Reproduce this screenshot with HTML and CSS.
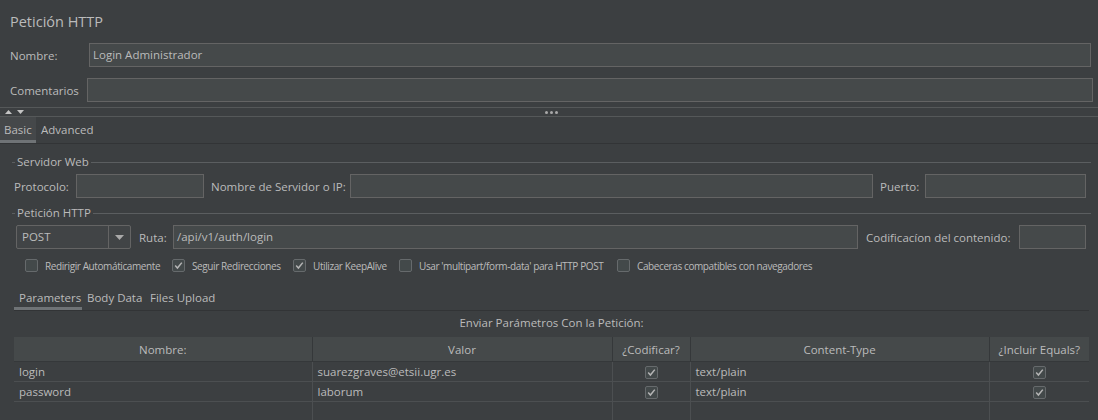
FILE: index.html
```html
<!DOCTYPE html>
<html lang="es">
<head>
<meta charset="utf-8">
<title>Petición HTTP</title>
<link rel="stylesheet" href="styles.css">
</head>
<body>
<div class="app">
  <div class="title">Petición HTTP</div>

  <div class="name-row">
    <span class="lbl lbl-name">Nombre:</span>
    <div class="input grow">Login Administrador</div>
  </div>
  <div class="comment-row">
    <span class="lbl lbl-comment">Comentarios</span>
    <div class="input grow"></div>
  </div>

  <div class="splitter">
    <div class="split-arrows">
      <svg width="7" height="4" viewBox="0 0 7 4"><polygon points="0,4 3.5,0 7,4" fill="#c4c4c4"/></svg>
      <svg width="7" height="4" viewBox="0 0 7 4"><polygon points="0,0 7,0 3.5,4" fill="#c4c4c4"/></svg>
    </div>
    <div class="split-dots"><i></i><i></i><i></i></div>
    <div></div>
  </div>

  <div class="tabbar top-tabs">
    <span class="tab tab-basic active">Basic</span>
    <span class="tab tab-adv">Advanced</span>
  </div>

  <div class="panel">
    <div class="group-title first"><span>Servidor Web</span></div>
    <div class="form-row server-row">
      <span class="lbl w-proto">Protocolo:</span>
      <div class="input proto"></div>
      <span class="lbl w-host">Nombre de Servidor o IP:</span>
      <div class="input grow"></div>
      <span class="lbl w-port">Puerto:</span>
      <div class="input port"></div>
    </div>

    <div class="group-title second"><span>Petición HTTP</span></div>
    <div class="form-row req-row">
      <div class="combo">
        <span class="combo-value">POST</span>
        <span class="combo-btn"><svg width="9" height="5" viewBox="0 0 9 5"><polygon points="0,0 9,0 4.5,5" fill="#a9a9a9"/></svg></span>
      </div>
      <span class="lbl w-ruta">Ruta:</span>
      <div class="input grow">/api/v1/auth/login</div>
      <span class="lbl w-enc">Codificacíon del contenido:</span>
      <div class="input enc"></div>
    </div>

    <div class="options">
      <label class="opt opt1"><span class="cb"></span><span class="opt-text">Redirigir Automáticamente</span></label>
      <label class="opt opt2"><span class="cb checked"><svg width="13" height="13" viewBox="0 0 13 13"><path d="M3.2 6.6 L5.4 9 L9.8 3.6" fill="none" stroke="#b5b5b5" stroke-width="1.5"/></svg></span><span class="opt-text">Seguir Redirecciones</span></label>
      <label class="opt opt3"><span class="cb checked"><svg width="13" height="13" viewBox="0 0 13 13"><path d="M3.2 6.6 L5.4 9 L9.8 3.6" fill="none" stroke="#b5b5b5" stroke-width="1.5"/></svg></span><span class="opt-text">Utilizar KeepAlive</span></label>
      <label class="opt opt4"><span class="cb"></span><span class="opt-text">Usar 'multipart/form-data' para HTTP POST</span></label>
      <label class="opt opt5"><span class="cb"></span><span class="opt-text">Cabeceras compatibles con navegadores</span></label>
    </div>

    <div class="tabbar param-tabs">
      <span class="tab tab-params active">Parameters</span>
      <span class="tab tab-body">Body Data</span>
      <span class="tab tab-files">Files Upload</span>
    </div>

    <div class="caption">Enviar Parámetros Con la Petición:</div>

    <table class="params">
      <colgroup>
        <col class="c-name"><col class="c-value"><col class="c-enc"><col class="c-type"><col class="c-eq">
      </colgroup>
      <thead>
        <tr><th>Nombre:</th><th>Valor</th><th>¿Codificar?</th><th>Content-Type</th><th>¿Incluir Equals?</th></tr>
      </thead>
      <tbody>
        <tr>
          <td>login</td><td>suarezgraves@etsii.ugr.es</td>
          <td class="center"><span class="cb small checked"><svg width="13" height="13" viewBox="0 0 13 13"><path d="M3.2 6.6 L5.4 9 L9.8 3.6" fill="none" stroke="#b5b5b5" stroke-width="1.5"/></svg></span></td>
          <td>text/plain</td>
          <td class="center"><span class="cb small checked"><svg width="13" height="13" viewBox="0 0 13 13"><path d="M3.2 6.6 L5.4 9 L9.8 3.6" fill="none" stroke="#b5b5b5" stroke-width="1.5"/></svg></span></td>
        </tr>
        <tr>
          <td>password</td><td>laborum</td>
          <td class="center"><span class="cb small checked"><svg width="13" height="13" viewBox="0 0 13 13"><path d="M3.2 6.6 L5.4 9 L9.8 3.6" fill="none" stroke="#b5b5b5" stroke-width="1.5"/></svg></span></td>
          <td>text/plain</td>
          <td class="center"><span class="cb small checked"><svg width="13" height="13" viewBox="0 0 13 13"><path d="M3.2 6.6 L5.4 9 L9.8 3.6" fill="none" stroke="#b5b5b5" stroke-width="1.5"/></svg></span></td>
        </tr>
        <tr class="empty"><td></td><td></td><td></td><td></td><td></td></tr>
      </tbody>
    </table>
  </div>
</div>
</body>
</html>
```

FILE: styles.css
```css
html, body {
  margin: 0;
  padding: 0;
  background: #3c3f41;
}

body {
  width: 1098px;
  height: 420px;
  overflow: hidden;
  font-family: "Open Sans", "Noto Sans", sans-serif;
  font-size: 11.5px;
  color: #bbbbbb;
}

.app {
  display: flex;
  flex-direction: column;
}

.title {
  padding: 12px 0 0 10px;
  height: 20px;
  line-height: 20px;
  font-size: 14.5px;
}

.name-row,
.comment-row {
  display: flex;
  align-items: center;
  margin-top: 11px;
  padding-left: 10px;
}

.name-row { padding-right: 7px; }
.comment-row { padding-right: 5px; }

.lbl-name { width: 79px; flex: none; }
.lbl-comment { width: 77px; flex: none; }

.lbl {
  flex: none;
  white-space: nowrap;
}

.input {
  box-sizing: border-box;
  height: 24px;
  line-height: 22px;
  border: 1px solid #646464;
  background: #45494a;
  padding: 0 3px;
  white-space: nowrap;
  flex: none;
}

.input.grow { flex: 1; }

/* splitter */
.splitter {
  box-sizing: border-box;
  margin-top: 5px;
  height: 10px;
  border-top: 1px solid #555859;
  border-bottom: 1px solid #555859;
  display: grid;
  grid-template-columns: 1fr auto 1fr;
  align-items: center;
}

.split-arrows {
  display: flex;
  gap: 5px;
  padding-left: 5px;
  align-items: center;
}

.split-arrows svg { display: block; }

.split-dots {
  display: flex;
  gap: 2px;
  margin-left: 4px;
}

.split-dots i {
  width: 3px;
  height: 3px;
  border-radius: 50%;
  background: #a9a9a9;
}

/* tabs */
.tabbar {
  display: flex;
  box-sizing: border-box;
  border-bottom: 1px solid #323436;
}

.top-tabs { height: 27px; }

.tab {
  box-sizing: border-box;
  display: flex;
  align-items: center;
  height: 100%;
  white-space: nowrap;
  border-bottom: 3px solid transparent;
  padding-top: 2px;
}

.tab.active { border-bottom-color: #6f7376; }

.top-tabs .tab.active { background: #45484a; }

.tab-basic { width: 36px; padding-left: 4px; }
.tab-adv { padding-left: 5px; }

/* panel */
.panel {
  padding: 0 7px 0 12px;
  display: flex;
  flex-direction: column;
}

.group-title {
  display: flex;
  align-items: center;
  height: 16px;
}

.group-title.first { margin-top: 10px; }
.group-title.second { margin-top: 7px; }

.group-title::before {
  content: "";
  width: 3px;
  border-top: 1px solid #5b5e60;
}

.group-title::after {
  content: "";
  flex: 1;
  border-top: 1px solid #5b5e60;
}

.group-title span {
  padding: 0 2px;
  line-height: 16px;
}

.form-row {
  display: flex;
  align-items: center;
  margin-top: 4px;
  padding-right: 5px;
}

.server-row { padding-left: 2px; }
.req-row { padding-left: 4px; }

.w-proto { width: 62px; }
.proto { width: 128px; }
.w-host { width: 139px; margin-left: 7px; }
.w-port { width: 45px; margin-left: 7px; }
.port { width: 161px; }

.w-ruta { width: 34px; margin-left: 8px; }
.w-enc { width: 153px; margin-left: 8px; }
.enc { width: 67px; }

.combo {
  box-sizing: border-box;
  width: 115px;
  height: 24px;
  border: 1px solid #646464;
  background: #414446;
  display: flex;
  flex: none;
  border-radius: 2px;
}

.combo-value {
  flex: 1;
  line-height: 22px;
  padding-left: 5px;
}

.combo-btn {
  width: 21px;
  border-left: 1px solid #646464;
  display: flex;
  align-items: center;
  justify-content: center;
}

.combo-btn svg { display: block; }

/* options */
.options {
  display: flex;
  align-items: center;
  margin-top: 10px;
  height: 13px;
  padding-left: 13px;
  font-size: 10px;
  letter-spacing: -0.4px;
}

.opt {
  display: flex;
  align-items: center;
  flex: none;
  white-space: nowrap;
}

.opt1 { width: 147px; }
.opt2 { width: 121px; }
.opt3 { width: 106px; }
.opt4 { width: 218px; }

.opt-text { margin-left: 7px; }

.cb {
  box-sizing: border-box;
  width: 13px;
  height: 13px;
  border: 1px solid #666a6c;
  background: #43494a;
  border-radius: 2px;
  flex: none;
  display: inline-flex;
  align-items: center;
  justify-content: center;
  position: relative;
}

.cb svg {
  position: absolute;
  left: -1px;
  top: -1px;
}

/* param tabs */
.param-tabs {
  margin-top: 13px;
  margin-left: 2px;
  margin-right: 2px;
  height: 26px;
}

.param-tabs .tab { padding-left: 5px; }
.tab-params { width: 68px; }
.tab-body { width: 63px; }

.caption {
  margin-top: 4px;
  height: 16px;
  line-height: 16px;
  text-align: center;
}

/* table */
.params {
  margin: 6px 2px 0 2px;
  border-collapse: collapse;
  table-layout: fixed;
  width: 1075px;
}

.c-name { width: 298px; }
.c-value { width: 300px; }
.c-enc { width: 78px; }
.c-type { width: 299px; }
.c-eq { width: 100px; }

.params th {
  height: 24px;
  padding: 0;
  background: #45494a;
  font-weight: normal;
  text-align: center;
  border-left: 1px solid #35383a;
  border-bottom: 1px solid #35383a;
}

.params th:first-child { border-left: none; }

.params td {
  height: 20px;
  box-sizing: border-box;
  padding: 0 5px;
  border-left: 1px solid #4c4f51;
  border-bottom: 1px solid #4c4f51;
  white-space: nowrap;
}

.params td:first-child { border-left: none; }

.params td.center {
  text-align: center;
  padding: 0;
}

.cb.small {
  vertical-align: middle;
}
```
